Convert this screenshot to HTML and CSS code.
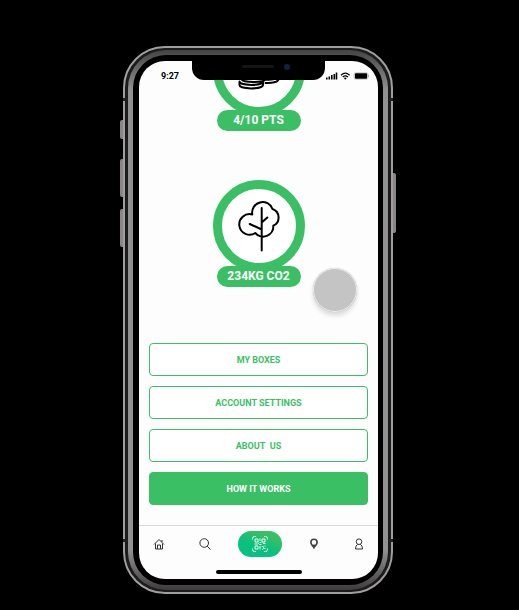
FILE: index.html
```html
<!DOCTYPE html>
<html lang="en">
<head>
<meta charset="utf-8">
<meta name="viewport" content="width=device-width, initial-scale=1">
<title>Rewards profile</title>
<link rel="stylesheet" href="styles.css">
</head>
<body>
<div class="phone">
  <span class="key key-mute"></span>
  <span class="key key-up"></span>
  <span class="key key-down"></span>
  <span class="key key-power"></span>
  <span class="antenna antenna-top"></span>
  <span class="antenna antenna-bottom"></span>
  <div class="band">
    <div class="bezel">
    <div class="screen">
      <div class="notch"><span class="speaker"></span><span class="camera"></span></div>
      <header class="status">
        <time>9:27</time>
        <svg class="signals" viewBox="0 0 43 8" aria-hidden="true">
          <path d="M0 5.500h1.600V7.500H0zM2.500 4.500h1.600v3H2.500zM5 3h1.600v4.500H5zM7.500 2h1.600v5.500H7.500zM9.700.5h1.600v7H9.700z"/>
          <path d="M15 3.200Q19.300-.8 23.600 3.200M16.700 5Q19.300 2.700 21.900 5" fill="none" stroke="#000" stroke-width="1.200"/>
          <path d="M17.800 6.100Q19.300 5 20.800 6.100L19.300 7.700z"/>
          <rect x="28.800" y="1.300" width="12.400" height="5.400" rx="1"/>
          <rect x="28" y=".5" width="14" height="7" rx="1.800" fill="none" stroke="#bbb" stroke-width=".6"/>
          <path d="M42.600 2.800v2.400" stroke="#999" stroke-width=".8"/>
        </svg>
      </header>
      <main class="stats">
        <section class="stat">
          <div class="ring">
            <svg class="coins" viewBox="0 0 50 50" aria-hidden="true">
              <path d="M5.500 37v3c0 4.500 23.500 4.500 23.500 0v-3M5.500 36.500c0 4.500 23.500 4.500 23.500 0M7.500 31v3c0 4 24 4 24 0v-3M7.500 31c0 4 24 4 24 0s-24-4-24 0M31.500 38c6 .5 13-1 13-4v-3M31.500 34.500c6 .5 13-.5 13-3.500"/>
            </svg>
          </div>
          <p class="value">4/10 PTS</p>
        </section>
        <section class="stat">
          <div class="ring">
            <svg class="tree" viewBox="0 0 50 60" aria-hidden="true">
              <path d="M18.300 18.500A10.300 10.300 0 1 0 21.300 37A10.200 10.200 0 0 0 39.300 29.700A9 9 0 0 0 38.500 13A10.500 10.500 0 0 0 18.300 18.500M27.700 12v42.500M15.700 28l12 5.500M27.700 26.500l5.600-5"/>
            </svg>
          </div>
          <p class="value">234KG CO2</p>
        </section>
      </main>
      <div class="menu">
        <button type="button">MY BOXES</button>
        <button type="button">ACCOUNT SETTINGS</button>
        <button type="button">ABOUT&nbsp; US</button>
        <button type="button" class="solid">HOW IT WORKS</button>
      </div>
      <nav class="tabs">
        <div class="tab-row">
          <a href="#home" aria-label="Home"><svg viewBox="0 0 12 12"><path d="M1 6.500L6 1.500l5 5M2.500 5.500V11h7V5.500M4.500 11V7h3v4M9 2v2"/></svg></a>
          <a href="#search" aria-label="Search"><svg viewBox="0 0 12 12"><circle cx="5.200" cy="5" r="4.300"/><path d="M8.200 8.200l3.300 3.300"/></svg></a>
          <a href="#scan" class="scan" aria-label="Scan"><svg viewBox="0 0 18 18"><path d="M1.500 4.500V3.500q0-2 2-2H5M13 1.500h1.500q2 0 2 2v1M16.500 13.500v1q0 2-2 2H13M5 16.500H3.500q-2 0-2-2v-1"/><path d="M4 4h3v3H4zM11 4h3v3h-3zM4 11h3v3H4zM9 3.500v2.500M8.500 7.500h2M3.500 9h3l1.500-1M8 9.500h2.500M12 8.500h2.500M9 11v3.500M10.500 11.500h2v2h2M11 14.300h1M14 10.500v1"/></svg></a>
          <a href="#map" aria-label="Map"><svg viewBox="0 0 12 12"><path class="pin" d="M6 .5a3.900 3.900 0 0 0-3.900 3.900C2.100 7 5 8.500 6 11.500 7 8.500 9.900 7 9.900 4.400A3.900 3.900 0 0 0 6 .5zm0 1.600a2.300 2.300 0 1 1 0 4.600 2.300 2.300 0 0 1 0-4.600z"/></svg></a>
          <a href="#profile" aria-label="Profile"><svg viewBox="0 0 12 12"><circle cx="6" cy="3.700" r="2.800"/><path d="M4.700 6.300Q2.500 7.500 2.500 11h7Q9.500 7.500 7.300 6.300"/></svg></a>
        </div>
        <span class="home-bar"></span>
      </nav>
      <span class="touch"></span>
    </div>
    </div>
  </div>
</div>
</body>
</html>
```
FILE: styles.css
```css
* { box-sizing: border-box; }

body {
  margin: 0;
  padding: 46px 3px 16px 0;
  background: #000;
  font-family: Roboto, "Liberation Sans", sans-serif;
  color: #000;
}

.phone {
  position: relative;
  max-width: 270px;
  margin: 0 auto;
  padding: 2px 3px;
  border: 2px solid #a09e9e;
  border-radius: 42px;
  background: #1d1c1d;
}

.band {
  padding: 5px;
  border-radius: 38px;
  background: linear-gradient(#454444, #929192 40px, #929192 calc(100% - 40px), #3f3c3c);
}

.bezel {
  padding: 6px 5px 6px 6px;
  border-radius: 33px;
  background: #000;
}

.key {
  position: absolute;
  left: -5px;
  width: 3px;
  border-radius: 2px 0 0 2px;
  background: #8b8586;
}

.key-mute { top: 72px; height: 19px; }
.key-up { top: 111px; height: 38px; }
.key-down { top: 161px; height: 38px; }

.key-power {
  top: 125px;
  left: auto;
  right: -5px;
  height: 60px;
  border-radius: 0 2px 2px 0;
}

.antenna {
  position: absolute;
  left: -2px;
  right: -2px;
  height: 3px;
  border: solid #222;
  border-width: 0 4px;
}

.antenna-top { top: 50px; }
.antenna-bottom { bottom: 50px; }

.screen {
  position: relative;
  display: flex;
  flex-direction: column;
  overflow: hidden;
  border-radius: 26px;
  background: #fdfdfd;
}

.notch {
  position: absolute;
  z-index: 2;
  top: 0;
  left: 53px;
  right: 53px;
  height: 19px;
  border-radius: 0 0 12px 12px;
  background: #000;
}

.speaker {
  position: absolute;
  top: 4px;
  left: 50px;
  width: 32px;
  height: 3px;
  border-radius: 2px;
  background: #151515;
}

.camera {
  position: absolute;
  top: 3px;
  right: 35px;
  width: 6px;
  height: 6px;
  border-radius: 50%;
  background: #14213d;
}

.status {
  display: flex;
  align-items: center;
  justify-content: space-between;
  height: 19px;
  padding: 10px 9px 0 22px;
  font-size: 9px;
  line-height: 10px;
  font-weight: 700;
}

.signals { width: 43px; height: 8px; }

.stats {
  display: flex;
  flex-direction: column;
  justify-content: flex-end;
  gap: 49px;
  height: 263px;
  padding-bottom: 56px;
  overflow: hidden;
}

.stat {
  display: flex;
  flex-direction: column;
  align-items: center;
}

.ring {
  display: grid;
  place-items: center;
  width: 92px;
  height: 92px;
  border: 9px solid #3bbf65;
  border-radius: 50%;
  background: #fff;
}

.ring svg {
  fill: none;
  stroke: #000;
  stroke-width: 2;
  stroke-linecap: round;
  stroke-linejoin: round;
}

.coins { width: 50px; height: 50px; }
.tree { width: 50px; height: 60px; }

.value {
  width: 84px;
  margin: -6px 0 0;
  border-radius: 11px;
  background: #3bbf65;
  color: #fff;
  font-size: 12px;
  line-height: 21px;
  font-weight: 700;
  text-align: center;
}

.menu {
  display: flex;
  flex-direction: column;
  gap: 10px;
  padding: 0 10px 20px;
}

.menu button {
  height: 33px;
  border: 1px solid #3bbf65;
  border-radius: 4px;
  background: #fff;
  color: #3bbf65;
  font-family: inherit;
  font-size: 9px;
  font-weight: 700;
}

.menu .solid { background: #3bbf65; color: #fff; }

.tabs {
  display: flex;
  flex-direction: column;
  align-items: center;
  gap: 13px;
  padding: 5px 0;
  border-top: 1px solid #d8d8d8;
}

.tab-row {
  display: grid;
  grid-template-columns: 40fr 52fr 58fr 50fr 39fr;
  place-items: center;
  width: 100%;
}

.tab-row a { display: grid; place-items: center; }

.tab-row svg {
  width: 12px;
  height: 12px;
  fill: none;
  stroke: #333;
  stroke-width: 1;
}

.tab-row .pin { fill: #444; fill-rule: evenodd; stroke: none; }

.tab-row .scan {
  width: 44px;
  height: 26px;
  border-radius: 13px;
  background: linear-gradient(200deg, #3bbf65 20%, #08c07f 60%);
}

.tab-row .scan svg { width: 18px; height: 18px; stroke: #e6fff0; }

.home-bar {
  width: 86px;
  height: 4px;
  border-radius: 2px;
  background: #000;
}

.touch {
  position: absolute;
  top: 207px;
  left: 174px;
  width: 44px;
  height: 44px;
  border: 1px solid #eee;
  border-radius: 50%;
  background: #c4c4c4;
  box-shadow: 0 0 1px #aaa, 0 4px 4px #ddd;
}
```
